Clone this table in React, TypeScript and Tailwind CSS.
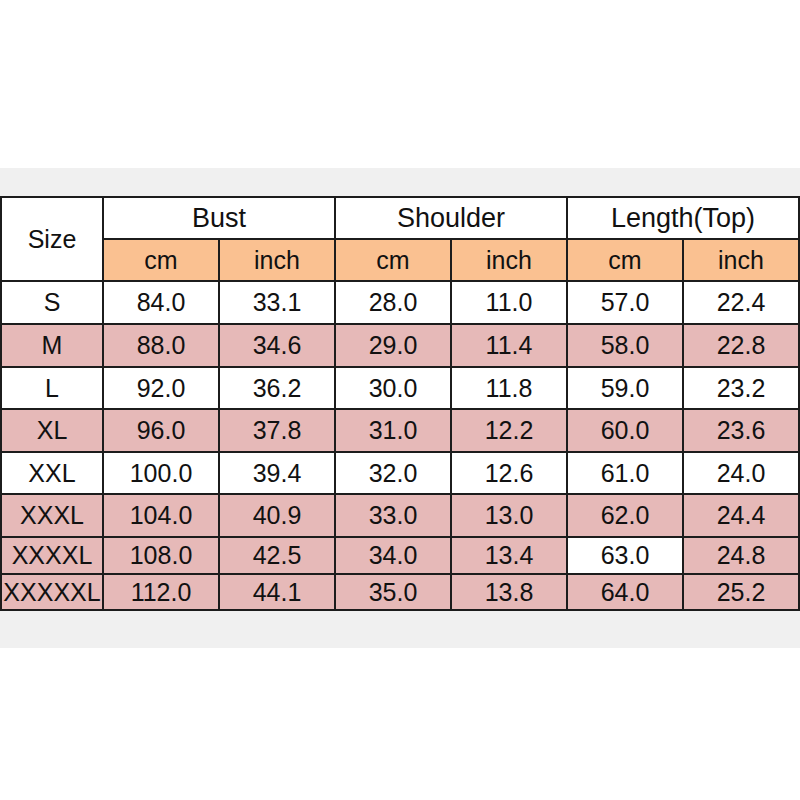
import { Fragment } from 'react';

const rows = [
  { size: 'S', vals: ['84.0', '33.1', '28.0', '11.0', '57.0', '22.4'], pink: false },
  { size: 'M', vals: ['88.0', '34.6', '29.0', '11.4', '58.0', '22.8'], pink: true },
  { size: 'L', vals: ['92.0', '36.2', '30.0', '11.8', '59.0', '23.2'], pink: false },
  { size: 'XL', vals: ['96.0', '37.8', '31.0', '12.2', '60.0', '23.6'], pink: true },
  { size: 'XXL', vals: ['100.0', '39.4', '32.0', '12.6', '61.0', '24.0'], pink: false },
  { size: 'XXXL', vals: ['104.0', '40.9', '33.0', '13.0', '62.0', '24.4'], pink: true },
  { size: 'XXXXL', vals: ['108.0', '42.5', '34.0', '13.4', '63.0', '24.8'], pink: true },
  { size: 'XXXXXL', vals: ['112.0', '44.1', '35.0', '13.8', '64.0', '25.2'], pink: true },
];

// the 63.0 cell is white in the original chart
const whiteCells = ['XXXXL-4'];

const cell = 'flex items-center justify-center whitespace-nowrap';

export default function App() {
  return (
    <div className="h-[800px] w-[800px] bg-white font-['Liberation_Sans',Arial,sans-serif] text-[#111]">
      <div className="h-[168px]" />
      <div className="h-[480px] bg-[#f0f0f0] pt-[28px]">
        <div className="grid grid-cols-[100px_repeat(6,114px)] grid-rows-[40px_40px_41px_41px_40px_41px_40px_41px_35px_34px] gap-[2px] bg-[#1c1c1c] p-[2px] text-[25px] leading-none">
          <div className={`${cell} row-span-2 bg-white`}>Size</div>
          <div className={`${cell} col-span-2 bg-white text-[27px]`}>Bust</div>
          <div className={`${cell} col-span-2 bg-white text-[27px]`}>Shoulder</div>
          <div className={`${cell} col-span-2 bg-white text-[27px]`}>Length(Top)</div>
          {['cm', 'inch', 'cm', 'inch', 'cm', 'inch'].map((u, i) => (
            <div key={i} className={`${cell} bg-[#fac191]`}>
              {u}
            </div>
          ))}
          {rows.map((r) => (
            <Fragment key={r.size}>
              <div className={`${cell} ${r.pink ? 'bg-[#e6b9b8]' : 'bg-white'}`}>{r.size}</div>
              {r.vals.map((v, i) => (
                <div
                  key={i}
                  className={`${cell} ${r.pink && !whiteCells.includes(`${r.size}-${i}`) ? 'bg-[#e6b9b8]' : 'bg-white'}`}
                >
                  {v}
                </div>
              ))}
            </Fragment>
          ))}
        </div>
      </div>
    </div>
  );
}
